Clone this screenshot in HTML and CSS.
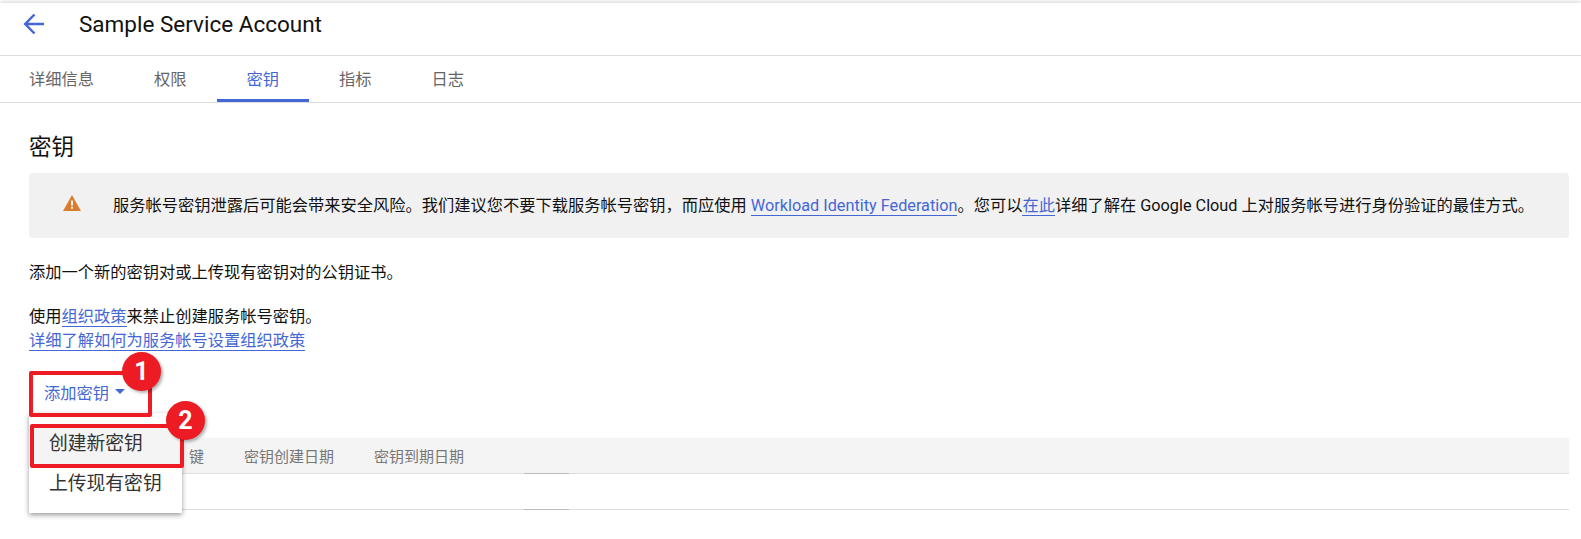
FILE: index.html
```html
<!DOCTYPE html>
<html lang="zh-CN">
<head>
    <meta charset="UTF-8">
    <meta name="viewport" content="width=device-width, initial-scale=1.0">
    <title>Sample Service Account</title>
    <link rel="stylesheet" href="styles.css">
</head>
<body>
    <header class="topbar">
        <svg class="back" viewBox="0 0 24 24" width="24" height="24"><path d="M22 12H4M12.5 2.5L3.2 12l9.3 9.5" fill="none" stroke="#4567d6" stroke-width="2.5"/></svg>
        <h1>Sample Service Account</h1>
    </header>
    <nav class="tabs">
        <a class="tab">详细信息</a>
        <a class="tab">权限</a>
        <a class="tab active">密钥</a>
        <a class="tab">指标</a>
        <a class="tab">日志</a>
    </nav>
    <main class="container">
        <h2>密钥</h2>
        <section class="banner">
            <svg class="warn" viewBox="0 0 18 16" width="18" height="16"><path d="M9 0L18 16H0z" fill="#d97e2f"/><path d="M8 5.5h2v5H8zM8 11.8h2v2H8z" fill="#f1f1f1"/></svg>
            <p>服务帐号密钥泄露后可能会带来安全风险。我们建议您不要下载服务帐号密钥，而应使用 <a href="#">Workload Identity Federation</a>。您可以<a href="#">在此</a>详细了解在 Google Cloud 上对服务帐号进行身份验证的最佳方式。</p>
        </section>
        <p class="intro">添加一个新的密钥对或上传现有密钥对的公钥证书。</p>
        <p class="policy">使用<a href="#">组织政策</a>来禁止创建服务帐号密钥。<br><a href="#">详细了解如何为服务帐号设置组织政策</a></p>
        <div class="add-wrap">
            <button class="add-btn">添加密钥<span class="caret"></span></button>
            <div class="mark mark-btn"></div>
            <div class="badge badge-1">1</div>
            <div class="menu">
                <div class="menu-item selected">创建新密钥</div>
                <div class="menu-item">上传现有密钥</div>
            </div>
            <div class="mark mark-item"></div>
            <div class="badge badge-2">2</div>
        </div>
        <div class="table-head">
            <span class="col-key">键</span>
            <span class="col-date">密钥创建日期</span>
            <span class="col-date">密钥到期日期</span>
        </div>
        <div class="table-row"></div>
    </main>
</body>
</html>
```

FILE: styles.css
```css
body {
    font-family: Roboto, "Noto Sans CJK SC", sans-serif;
    background-color: white;
    margin: 0;
    padding: 0;
    color: #111;
}
a {
    color: #4567d6;
    text-decoration: none;
}
p {
    margin: 0;
}
.topbar {
    height: 42px;
    margin-top: 3px;
    padding: 0 0 10px 22px;
    display: flex;
    align-items: center;
    border-bottom: 1px solid #dedede;
    box-shadow: 0 -2px 3px rgba(0, 0, 0, 0.12);
}
.back {
    margin-right: 33px;
}
.topbar h1 {
    font-size: 22.5px;
    font-weight: 400;
    margin: 0;
}
.tabs {
    height: 46px;
    display: flex;
    border-bottom: 1px solid #dedede;
}
.tab {
    padding: 0 30px;
    display: flex;
    align-items: center;
    font-size: 16.25px;
    color: #666;
    border-bottom: 3px solid transparent;
}
.tab:first-child {
    margin-left: -1px;
}
.tab.active {
    color: #4567d6;
    border-bottom-color: #4567d6;
}
.container {
    padding: 0 12px 29px 29px;
}
h2 {
    font-size: 22.5px;
    font-weight: 400;
    margin: 0;
    padding-top: 28px;
    line-height: 32px;
    height: 42px;
}
.banner {
    height: 61px;
    display: flex;
    align-items: center;
    padding: 0 0 4px 34px;
    background-color: #f1f1f1;
    border-radius: 4px;
    font-size: 16.25px;
}
.warn {
    flex: none;
    margin: -1px 32px 0 0;
}
.banner a, .policy a {
    border-bottom: 1px solid #4567d6;
}
.intro {
    font-size: 16.25px;
    line-height: 24px;
    margin-top: 23px;
}
.policy {
    font-size: 16.25px;
    line-height: 24px;
    margin-top: 20px;
}
.add-wrap {
    position: relative;
    height: 85px;
    padding-top: 19px;
    box-sizing: border-box;
}
.add-btn {
    border: none;
    background: none;
    padding: 0 0 6px 15px;
    font: inherit;
    font-size: 16.25px;
    color: #4567d6;
    display: flex;
    align-items: center;
    height: 45px;
}
.caret {
    width: 0;
    height: 0;
    margin-left: 6px;
    border-left: 5px solid transparent;
    border-right: 5px solid transparent;
    border-top: 5px solid #4567d6;
}
.mark {
    position: absolute;
    border: 4px solid #ed1c24;
    border-radius: 2px;
    box-sizing: border-box;
}
.mark-btn {
    left: 0;
    top: 18px;
    width: 123px;
    height: 46px;
}
.mark-item {
    left: 1px;
    top: 71px;
    width: 154px;
    height: 44px;
}
.badge {
    position: absolute;
    width: 39px;
    height: 39px;
    border-radius: 50%;
    background-color: #ed1c24;
    color: white;
    font-size: 25px;
    font-weight: 700;
    text-align: center;
    line-height: 39px;
    box-shadow: 2px 2px 3px rgba(0, 0, 0, 0.3);
}
.badge-1 {
    left: 93px;
    top: -1px;
}
.badge-2 {
    left: 137px;
    top: 48px;
}
.menu {
    position: absolute;
    left: 0;
    top: 60px;
    width: 153px;
    height: 100px;
    padding-top: 12px;
    box-sizing: border-box;
    background-color: white;
    box-shadow: 0 2px 5px rgba(0, 0, 0, 0.4);
    z-index: 1;
}
.mark, .badge {
    z-index: 2;
}
.menu-item {
    height: 40px;
    line-height: 39px;
    padding-left: 20px;
    font-size: 18.8px;
    color: #333;
}
.menu-item.selected {
    background-color: #f4f4f4;
}
.table-head {
    position: relative;
    height: 35px;
    display: flex;
    align-items: center;
    padding-left: 160px;
    background-color: #f4f4f4;
    border-bottom: 1px solid #dedede;
    font-size: 15px;
    color: #777;
}
.col-key, .col-date {
    margin-right: 40px;
}
.table-row {
    position: relative;
    height: 35px;
    border-bottom: 1px solid #dedede;
}
/* column resize handle */
.table-head::after, .table-row::after {
    content: "";
    position: absolute;
    left: 495px;
    bottom: -1px;
    width: 45px;
    height: 1px;
    background-color: #bbb;
}
```
